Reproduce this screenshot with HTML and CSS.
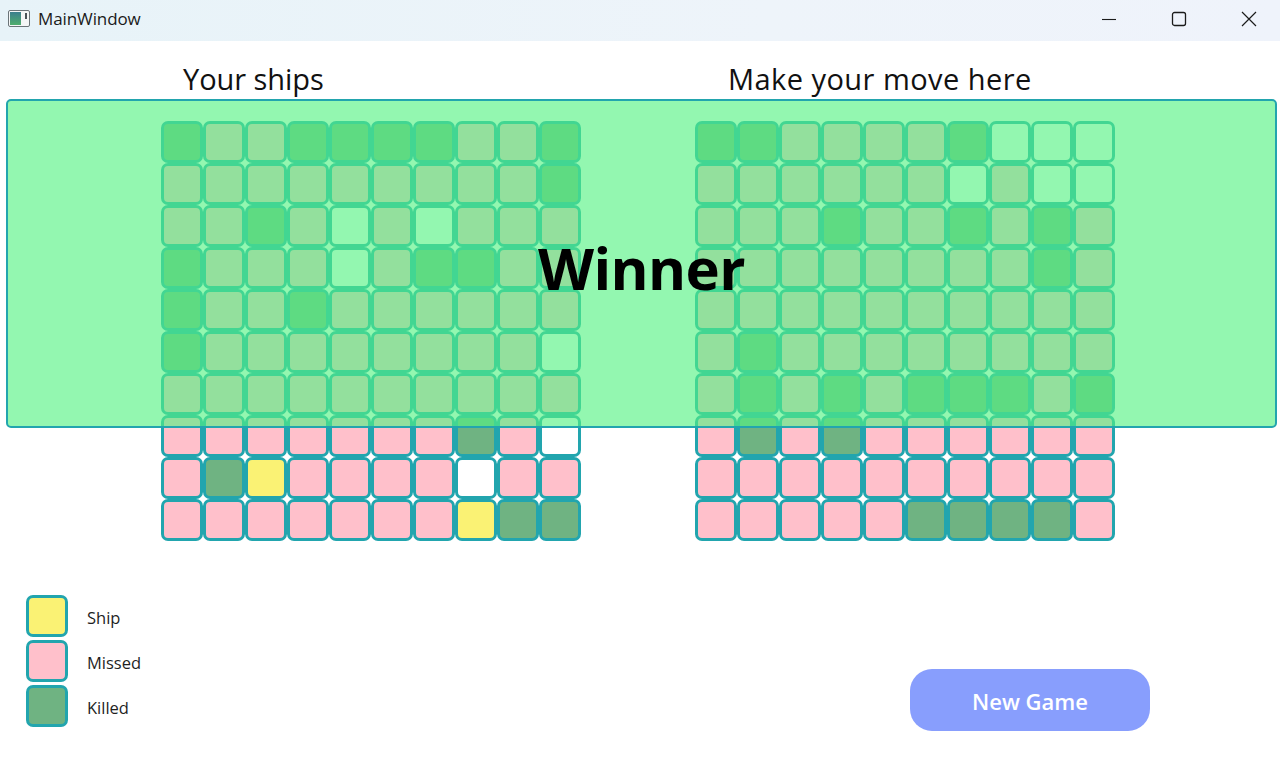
FILE: index.html
```html
<!DOCTYPE html>
<html>
<head>
<meta charset="utf-8">
<title>MainWindow</title>
<link rel="stylesheet" href="styles.css">
</head>
<body>
<div class="window">
  <div class="titlebar">
    <div class="title-left">
      <svg class="app-icon" width="22" height="17" viewBox="0 0 22 17">
        <defs>
          <linearGradient id="g1" x1="0" y1="0" x2="0" y2="1">
            <stop offset="0" stop-color="#3c7f8e"/>
            <stop offset="1" stop-color="#4fae6c"/>
          </linearGradient>
        </defs>
        <rect x="0.5" y="0.5" width="21" height="16" rx="1.5" fill="#f4f6f6" stroke="#6b7478"/>
        <rect x="2" y="2" width="11" height="13" fill="url(#g1)"/>
        <rect x="17" y="3" width="2" height="6" fill="#4a5257"/>
      </svg>
      <span class="title-text">MainWindow</span>
    </div>
    <div class="controls">
      <div class="ctl"><svg width="16" height="16" viewBox="0 0 16 16"><line x1="1" y1="8.5" x2="15" y2="8.5" stroke="#1b1b1b" stroke-width="1.1"/></svg></div>
      <div class="ctl"><svg width="16" height="16" viewBox="0 0 16 16"><rect x="1.5" y="1.5" width="13" height="13" rx="2" fill="none" stroke="#1b1b1b" stroke-width="1.3"/></svg></div>
      <div class="ctl"><svg width="16" height="16" viewBox="0 0 16 16"><path d="M1 1 L15 15 M15 1 L1 15" stroke="#1b1b1b" stroke-width="1.2"/></svg></div>
    </div>
  </div>

  <div class="content">
    <div class="boards">
      <div class="board">
        <div class="board-label left-label">Your ships</div>
        <div class="grid">
          <div class="c k"></div><div class="c m"></div><div class="c m"></div><div class="c k"></div><div class="c k"></div><div class="c k"></div><div class="c k"></div><div class="c m"></div><div class="c m"></div><div class="c k"></div>
          <div class="c m"></div><div class="c m"></div><div class="c m"></div><div class="c m"></div><div class="c m"></div><div class="c m"></div><div class="c m"></div><div class="c m"></div><div class="c m"></div><div class="c k"></div>
          <div class="c m"></div><div class="c m"></div><div class="c k"></div><div class="c m"></div><div class="c w"></div><div class="c m"></div><div class="c w"></div><div class="c m"></div><div class="c m"></div><div class="c m"></div>
          <div class="c k"></div><div class="c m"></div><div class="c m"></div><div class="c m"></div><div class="c w"></div><div class="c m"></div><div class="c k"></div><div class="c k"></div><div class="c m"></div><div class="c m"></div>
          <div class="c k"></div><div class="c m"></div><div class="c m"></div><div class="c k"></div><div class="c m"></div><div class="c m"></div><div class="c m"></div><div class="c m"></div><div class="c m"></div><div class="c m"></div>
          <div class="c k"></div><div class="c m"></div><div class="c m"></div><div class="c m"></div><div class="c m"></div><div class="c m"></div><div class="c m"></div><div class="c m"></div><div class="c m"></div><div class="c w"></div>
          <div class="c m"></div><div class="c m"></div><div class="c m"></div><div class="c m"></div><div class="c m"></div><div class="c m"></div><div class="c m"></div><div class="c m"></div><div class="c m"></div><div class="c m"></div>
          <div class="c m"></div><div class="c m"></div><div class="c m"></div><div class="c m"></div><div class="c m"></div><div class="c m"></div><div class="c m"></div><div class="c k"></div><div class="c m"></div><div class="c w"></div>
          <div class="c m"></div><div class="c k"></div><div class="c s"></div><div class="c m"></div><div class="c m"></div><div class="c m"></div><div class="c m"></div><div class="c w"></div><div class="c m"></div><div class="c m"></div>
          <div class="c m"></div><div class="c m"></div><div class="c m"></div><div class="c m"></div><div class="c m"></div><div class="c m"></div><div class="c m"></div><div class="c s"></div><div class="c k"></div><div class="c k"></div>
        </div>
      </div>
      <div class="board">
        <div class="board-label right-label">Make your move here</div>
        <div class="grid">
          <div class="c k"></div><div class="c k"></div><div class="c m"></div><div class="c m"></div><div class="c m"></div><div class="c m"></div><div class="c k"></div><div class="c w"></div><div class="c w"></div><div class="c w"></div>
          <div class="c m"></div><div class="c m"></div><div class="c m"></div><div class="c m"></div><div class="c m"></div><div class="c m"></div><div class="c w"></div><div class="c m"></div><div class="c w"></div><div class="c w"></div>
          <div class="c m"></div><div class="c m"></div><div class="c m"></div><div class="c k"></div><div class="c m"></div><div class="c m"></div><div class="c k"></div><div class="c m"></div><div class="c k"></div><div class="c m"></div>
          <div class="c m"></div><div class="c m"></div><div class="c m"></div><div class="c m"></div><div class="c m"></div><div class="c m"></div><div class="c m"></div><div class="c m"></div><div class="c k"></div><div class="c m"></div>
          <div class="c m"></div><div class="c m"></div><div class="c m"></div><div class="c m"></div><div class="c m"></div><div class="c m"></div><div class="c m"></div><div class="c m"></div><div class="c m"></div><div class="c m"></div>
          <div class="c m"></div><div class="c k"></div><div class="c m"></div><div class="c m"></div><div class="c m"></div><div class="c m"></div><div class="c m"></div><div class="c m"></div><div class="c m"></div><div class="c m"></div>
          <div class="c m"></div><div class="c k"></div><div class="c m"></div><div class="c k"></div><div class="c m"></div><div class="c k"></div><div class="c k"></div><div class="c k"></div><div class="c m"></div><div class="c k"></div>
          <div class="c m"></div><div class="c k"></div><div class="c m"></div><div class="c k"></div><div class="c m"></div><div class="c m"></div><div class="c m"></div><div class="c m"></div><div class="c m"></div><div class="c m"></div>
          <div class="c m"></div><div class="c m"></div><div class="c m"></div><div class="c m"></div><div class="c m"></div><div class="c m"></div><div class="c m"></div><div class="c m"></div><div class="c m"></div><div class="c m"></div>
          <div class="c m"></div><div class="c m"></div><div class="c m"></div><div class="c m"></div><div class="c m"></div><div class="c k"></div><div class="c k"></div><div class="c k"></div><div class="c k"></div><div class="c m"></div>
        </div>
      </div>
    </div>

    <div class="bottom">
      <div class="legend">
        <div class="legend-row"><div class="swatch s"></div><span>Ship</span></div>
        <div class="legend-row"><div class="swatch m"></div><span>Missed</span></div>
        <div class="legend-row"><div class="swatch k"></div><span>Killed</span></div>
      </div>
      <button class="new-game">New Game</button>
    </div>

    <div class="winner-overlay"><span>Winner</span></div>
  </div>
</div>
</body>
</html>
```
FILE: styles.css
```css
html, body {
  margin: 0;
  padding: 0;
  background: #ffffff;
}

.window {
  width: 1280px;
  height: 778px;
  overflow: hidden;
  font-family: "Open Sans", "Noto Sans", sans-serif;
  color: #111;
}

.titlebar {
  height: 41px;
  background: linear-gradient(90deg, #e7f3f8 0%, #eef4fa 60%, #eff3fb 100%);
  display: flex;
  align-items: center;
  justify-content: space-between;
}

.title-left {
  display: flex;
  align-items: center;
  padding-left: 8px;
  gap: 8px;
}

.app-icon {
  display: block;
  margin-top: -4px;
}

.title-text {
  font-family: "Open Sans", sans-serif;
  font-size: 17px;
  color: #1a1a1a;
  margin-top: -4px;
  letter-spacing: -0.1px;
}

.controls {
  display: flex;
  height: 100%;
  margin-top: -4px;
  margin-right: -4px;
}

.ctl {
  width: 70px;
  display: flex;
  align-items: center;
  justify-content: center;
}

.ctl svg { display: block; }

.content {
  position: relative;
  height: 737px;
}

.boards {
  display: flex;
  gap: 114px;
  padding-left: 161px;
  padding-top: 18px;
}

.board {
  display: flex;
  flex-direction: column;
}

.board-label {
  font-size: 29px;
  line-height: 40px;
  height: 40px;
  color: #111;
}

.left-label { padding-left: 22px; letter-spacing: -0.05px; }
.right-label { padding-left: 33px; letter-spacing: 0.45px; }

.grid {
  margin-top: 22px;
  display: grid;
  grid-template-columns: repeat(10, 42px);
  grid-auto-rows: 42px;
}

.c {
  box-sizing: border-box;
  border: 3px solid #22a5ae;
  border-radius: 7px;
}

.m { background: #ffc0cb; }
.k { background: #6fb382; }
.s { background: #faf274; }
.w { background: #ffffff; }

.bottom {
  display: flex;
  justify-content: space-between;
  align-items: flex-start;
  padding-left: 26px;
  padding-right: 130px;
  margin-top: 54px;
}

.legend {
  display: flex;
  flex-direction: column;
  gap: 3px;
}

.legend-row {
  display: flex;
  align-items: center;
  height: 42px;
}

.swatch {
  box-sizing: border-box;
  width: 42px;
  height: 42px;
  border: 3px solid #22a5ae;
  border-radius: 7px;
}

.legend-row span {
  margin-left: 19px;
  margin-top: 2px;
  font-size: 16.5px;
  color: #1f1f1f;
}

.new-game {
  margin-top: 74px;
  width: 240px;
  height: 62px;
  border: none;
  border-radius: 22px;
  background: #889efd;
  color: #ffffff;
  font-family: "Open Sans", sans-serif;
  font-weight: 600;
  font-size: 22px;
  padding: 1px 0 0 0;
}

.winner-overlay {
  position: absolute;
  left: 6px;
  top: 58px;
  width: 1271px;
  height: 329px;
  box-sizing: border-box;
  border: 2px solid #22a5ae;
  border-radius: 5px;
  background: rgba(85, 242, 131, 0.635);
  display: flex;
  align-items: center;
  justify-content: center;
}

.winner-overlay span {
  font-size: 58px;
  font-weight: 700;
  color: #000;
  margin-top: 8px;
  letter-spacing: -0.6px;
}
```
